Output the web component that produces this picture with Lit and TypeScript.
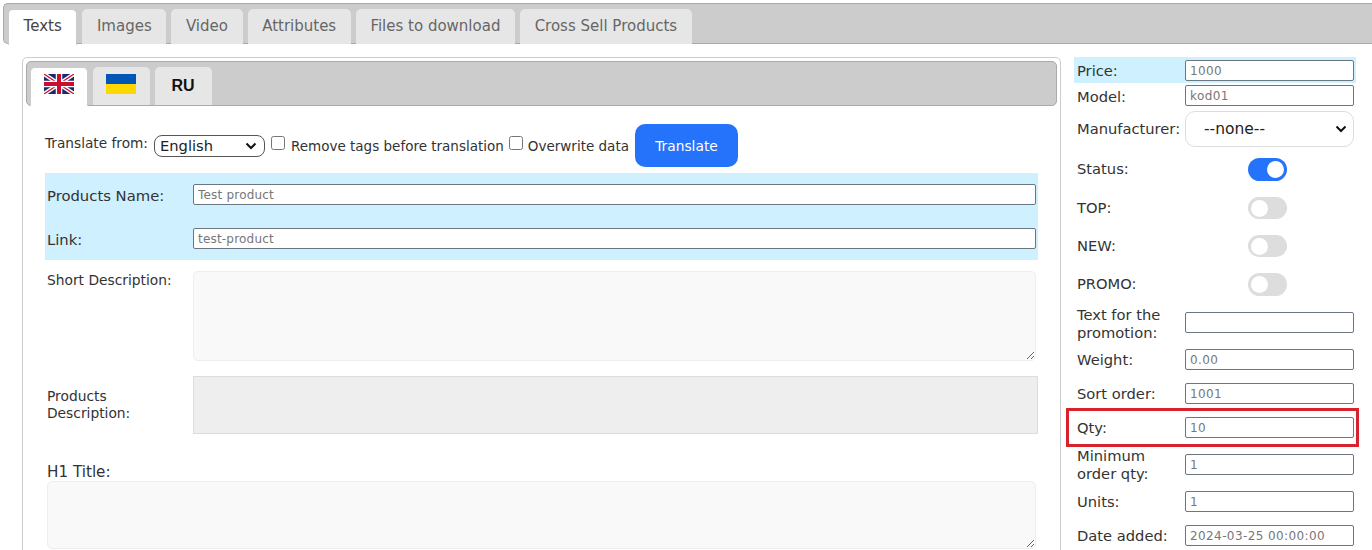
import { LitElement, html, css } from "lit";
import { customElement } from "lit/decorators.js";

@customElement("app-root")
export class AppRoot extends LitElement {
  static styles = css`
    :host { display: block; height: 550px; overflow: hidden; background: #fff; color: #333; font-family: "DejaVu Sans", Verdana, sans-serif; font-size: 14px; }
    * { box-sizing: border-box; }
    .page { padding: 3px 0 0 3px; }
    .tabbar { display: flex; gap: 5px; height: 41px; padding: 5px 0 0 4px; background: #ccc; border: 1px solid #aaa; border-width: 1px 0 1px 1px; border-radius: 5px 0 0 5px; }
    .tab { height: 35px; padding: 8px 14.6px 0; background: #e6e6e6; color: #666; font-size: 15px; border-radius: 5px 5px 0 0; white-space: nowrap; }
    .tab.active { background: #fff; color: #444; height: 36px; padding-top: 7px; border: 1px solid #ccc; border-bottom: 0; }
    .content { display: flex; padding: 13px 0 0 19px; }
    .panel { width: 1039px; height: 520px; padding: 3px 3px 0 3px; border: 1px solid #ccc; border-radius: 5px 5px 0 0; flex: none; }
    .subbar { display: flex; gap: 5px; height: 45px; padding: 5px 0 0 3px; background: #ccc; border: 1px solid #aaa; border-radius: 5px; }
    .subtab { width: 57px; height: 38px; padding: 7px 1px 0 0; background: #e6e6e6; border-radius: 5px 5px 0 0; display: flex; align-items: flex-start; justify-content: center; }
    .subtab.active { background: #fff; padding: 6px 0 0; border: 1px solid #ccc; border-bottom: 0; height: 39px; width: 58px; }
    .subtab.text { padding-top: 10px; font: 700 16px "Liberation Sans", Arial, sans-serif; color: #111; }
    .subtab svg { display: block; }
    .translate { display: flex; align-items: center; height: 43px; margin: 18px 0 6px 19px; white-space: nowrap; font-size: 13.5px; }
    .translate .from { margin-top: -5px; font-size: 13.7px; }
    .lang, .manu { appearance: none; background-color: #fff; background-repeat: no-repeat; background-image: url("data:image/svg+xml,%3Csvg xmlns='http://www.w3.org/2000/svg' width='12' height='8' viewBox='0 0 12 8'%3E%3Cpath d='M1.5 1.5 6 6l4.5-4.5' fill='none' stroke='%23111' stroke-width='2'/%3E%3C/svg%3E"); }
    .lang { width: 111px; height: 22px; margin: 0 6px; padding: 0 0 0 5px; border: 1px solid #555; border-radius: 8px; font: 14.7px "DejaVu Sans", sans-serif; color: #222; background-position: right 7px center; }
    .check { width: 14px; height: 14px; margin: -5px 5px 0 0; flex: none; }
    .translate span.opt { margin-right: 6px; }
    .translate span.opt.first { margin: 0 5px 0 1px; }
    .btn { width: 103px; height: 43px; border: 0; border-radius: 10px; background: #2673fb; color: #fff; font: 13.8px "DejaVu Sans", sans-serif; }
    .band { width: 993px; margin-left: 19px; height: 87px; background: #cff0ff; padding-top: 11px; }
    .nrow { display: flex; height: 44px; padding-left: 2px; }
    .nrow label { width: 146px; flex: none; padding-top: 3px; font-size: 14.8px; }
    .tinput { width: 843px; height: 21px; padding: 0 4px; border: 1px solid #6b7680; border-radius: 2px; background: #fff; font: 12px "DejaVu Sans", sans-serif; letter-spacing: .2px; color: #777; outline: none; }
    .drow { display: flex; margin: 11px 0 0 21px; }
    .drow label { width: 146px; flex: none; padding-top: 1px; font-size: 13.8px; }
    .ta { display: block; width: 843px; height: 90px; background: #f9f9f9; border: 1px solid #eee; border-radius: 5px; outline: none; }
    .editor { width: 845px; height: 58px; background: #eee; border: 1px solid #ddd; }
    .descr { margin-top: 15px; }
    .descr label { padding-top: 12px; line-height: 17px; }
    .h1 { margin: 30px 0 0 21px; line-height: 17px; font-size: 15.2px; }
    .h1 .ta { width: 989px; height: 68px; }
    .side { width: 282px; margin-left: 13px; flex: none; font-size: 14.7px; }
    .row { display: flex; align-items: center; position: relative; }
    .row .lbl { width: 111px; flex: none; padding-left: 3px; line-height: 18px; }
    .row .lbl.nudge { padding-top: 3px; }
    .field { height: 21px; }
    .g2 { margin-top: 2px; }
    .g13 { margin-top: 13px; }
    .g16 { margin-top: 16px; }
    .sinput { width: 169px; height: 21px; padding: 0 4px; border: 1px solid #6b7680; border-radius: 2px; background: #fff; font: 12px "DejaVu Sans", sans-serif; letter-spacing: .4px; color: #777; outline: none; }
    .price { background: #cff0ff; height: 26px; padding-top: 1px; }
    .mrow { height: 36px; margin-top: 5px; }
    .manu { width: 169px; height: 36px; padding: 0 0 0 18px; border: 1px solid #ddd; border-radius: 10px; font: 15.5px "DejaVu Sans", sans-serif; color: #222; background-position: right 6px center; }
    .srow { height: 22px; margin-top: 16px; }
    .srow.tall { height: 23px; }
    .srow.tall .lbl { padding-bottom: 2px; }
    .srow.first { margin-top: 11px; }
    .switch { margin-left: 63px; width: 39px; height: 100%; border-radius: 12px; background: #ddd; position: relative; }
    .switch::after { content: ""; position: absolute; top: 3px; left: 3px; width: 17px; height: 17px; border-radius: 50%; background: #fff; }
    .switch.on { background: #2673fb; }
    .switch.on::after { left: 19px; }
    .mark { position: absolute; left: -8px; top: -9px; width: 293px; height: 39px; border: 3px solid #d8222c; pointer-events: none; }
  `;

  render() {
    const tabs = ["Images", "Video", "Attributes", "Files to download", "Cross Sell Products"];
    const sw = (label: string, on: boolean, cls: string) => html`
      <div class="row srow ${cls}"><div class="lbl">${label}</div><div class="switch ${on ? "on" : ""}"></div></div>`;
    const inp = (label: unknown, value: string, gap: string, nudge = false) => html`
      <div class="row field ${gap}"><div class="lbl ${nudge ? "nudge" : ""}">${label}</div><input class="sinput" .value=${value} /></div>`;
    return html`
      <div class="page">
        <div class="tabbar">
          <div class="tab active">Texts</div>
          ${tabs.map((t) => html`<div class="tab">${t}</div>`)}
        </div>
        <div class="content">
          <div class="panel">
            <div class="subbar">
              <div class="subtab active">
                <svg width="30" height="20" viewBox="0 0 60 40">
                  <rect width="60" height="40" fill="#1a2a6c" />
                  <path d="M0 0 60 40M60 0 0 40" stroke="#fff" stroke-width="8" />
                  <path d="M0 0 60 40M60 0 0 40" stroke="#c8102e" stroke-width="2.6" />
                  <path d="M30 0V40M0 20H60" stroke="#fff" stroke-width="13" />
                  <path d="M30 0V40M0 20H60" stroke="#c8102e" stroke-width="8" />
                </svg>
              </div>
              <div class="subtab">
                <svg width="30" height="20" viewBox="0 0 30 20">
                  <rect width="30" height="10" fill="#0057b7" />
                  <rect y="10" width="30" height="10" fill="#ffd700" />
                </svg>
              </div>
              <div class="subtab text">RU</div>
            </div>
            <div class="translate">
              <span class="from">Translate from:</span>
              <select class="lang"><option>English</option></select>
              <input class="check" type="checkbox" />
              <span class="opt first">Remove tags before translation</span>
              <input class="check" type="checkbox" />
              <span class="opt">Overwrite data</span>
              <button class="btn">Translate</button>
            </div>
            <div class="band">
              <div class="nrow"><label>Products Name:</label><input class="tinput" .value=${"Test product"} /></div>
              <div class="nrow"><label>Link:</label><input class="tinput" .value=${"test-product"} /></div>
            </div>
            <div class="drow"><label>Short Description:</label><textarea class="ta"></textarea></div>
            <div class="drow descr"><label>Products<br />Description:</label><div class="editor"></div></div>
            <div class="h1">H1 Title:<textarea class="ta"></textarea></div>
          </div>
          <div class="side">
            <div class="row price"><div class="lbl">Price:</div><input class="sinput" .value=${"1000"} /></div>
            ${inp("Model:", "kod01", "g2", true)}
            <div class="row mrow"><div class="lbl">Manufacturer:</div><select class="manu"><option>--none--</option></select></div>
            ${sw("Status:", true, "first tall")}
            ${sw("TOP:", false, "")}
            ${sw("NEW:", false, "")}
            ${sw("PROMO:", false, "tall")}
            ${inp(html`Text for the<br />promotion:`, "", "g16", true)}
            ${inp("Weight:", "0.00", "g16")}
            ${inp("Sort order:", "1001", "g13")}
            <div class="row field g13"><div class="lbl">Qty:</div><input class="sinput" .value=${"10"} /><div class="mark"></div></div>
            ${inp(html`Minimum<br />order qty:`, "1", "g16")}
            ${inp("Units:", "1", "g16")}
            ${inp("Date added:", "2024-03-25 00:00:00", "g13")}
          </div>
        </div>
      </div>
    `;
  }
}
